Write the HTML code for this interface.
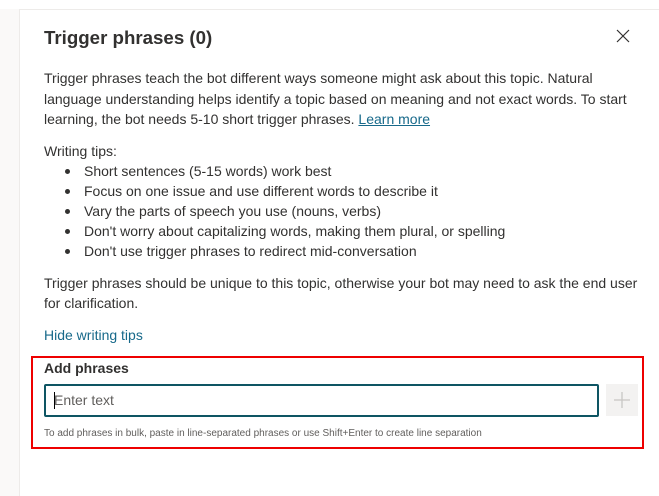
<!DOCTYPE html>
<html><head><style>
html,body{margin:0;padding:0;width:659px;height:496px;overflow:hidden;background:#fff;font-family:"Liberation Sans",sans-serif;color:#323130}
.left{position:absolute;left:0;top:9px;width:19px;height:487px;background:#faf9f8;border-right:1px solid #edebe9}
.topline{position:absolute;left:0;top:9px;width:659px;height:1px;background:#edebe9}
.t{position:absolute;left:44px;font-size:14px;white-space:nowrap;line-height:20px}
h1{position:absolute;left:44px;top:24px;margin:0;font-size:18.7px;font-weight:600;color:#323130;line-height:28px}
.b{position:absolute;left:68px;font-size:14px;line-height:20px;white-space:nowrap}
.b:before{content:"";position:absolute;left:-3px;top:8px;width:5px;height:5px;border-radius:50%;background:#323130}
.b span{margin-left:16px}
a{color:#17698a;text-decoration:underline}
.red{position:absolute;left:31px;top:356px;width:609px;height:89px;border:2px solid #e00}
.inp{position:absolute;left:44px;top:384px;width:551px;height:29px;border:2px solid #0e5563;border-radius:2px}
.inp span{position:absolute;left:8px;top:6px;font-size:14px;color:#605e5c}
.inp i{position:absolute;left:8px;top:6px;width:1px;height:17px;background:#000}
.plus{position:absolute;left:606px;top:384px;width:32px;height:32px;background:#f3f2f1}
</style></head><body>
<div class="topline"></div>
<div class="left"></div>
<h1>Trigger phrases (0)</h1>
<svg style="position:absolute;left:616px;top:29px" width="14" height="14" viewBox="0 0 14 14"><path d="M1 1L13 13M13 1L1 13" stroke="#323130" stroke-width="1.2"/></svg>
<div class="t" style="top:68px">Trigger phrases teach the bot different ways someone might ask about this topic. Natural</div>
<div class="t" style="top:88.5px">language understanding helps identify a topic based on meaning and not exact words. To start</div>
<div class="t" style="top:109px">learning, the bot needs 5-10 short trigger phrases. <a>Learn more</a></div>
<div class="t" style="top:141px">Writing tips:</div>
<div class="b" style="top:161px"><span>Short sentences (5-15 words) work best</span></div>
<div class="b" style="top:181px"><span>Focus on one issue and use different words to describe it</span></div>
<div class="b" style="top:201px"><span>Vary the parts of speech you use (nouns, verbs)</span></div>
<div class="b" style="top:221px"><span>Don't worry about capitalizing words, making them plural, or spelling</span></div>
<div class="b" style="top:241px"><span>Don't use trigger phrases to redirect mid-conversation</span></div>
<div class="t" style="top:273px">Trigger phrases should be unique to this topic, otherwise your bot may need to ask the end user</div>
<div class="t" style="top:293px">for clarification.</div>
<div class="t" style="top:325px;color:#17698a">Hide writing tips</div>
<div class="red"></div>
<div class="t" style="top:358px;font-weight:bold">Add phrases</div>
<div class="inp"><i></i><span>Enter text</span></div>
<div class="plus"><svg style="position:absolute;left:8px;top:8px" width="16" height="16"><path d="M8 0V16M0 8H16" stroke="#c8c6c4" stroke-width="1.3"/></svg></div>
<div class="t" style="top:424px;font-size:10px;color:#605e5c">To add phrases in bulk, paste in line-separated phrases or use Shift+Enter to create line separation</div>
</body></html>
